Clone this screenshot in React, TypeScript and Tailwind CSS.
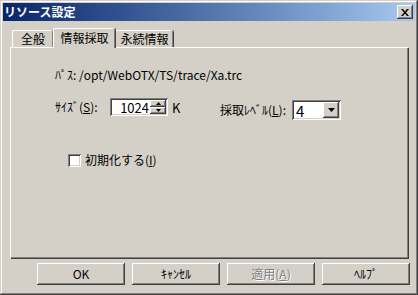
const FONT = { fontFamily: '"Noto Sans CJK JP", "Liberation Sans", sans-serif' }

const RAISED =
  'shadow-[inset_-1px_-1px_#404040,inset_1px_1px_#ffffff,inset_-2px_-2px_#808080,inset_2px_2px_#d4d0c8]'
const SUNKEN =
  'shadow-[inset_1px_1px_#808080,inset_-1px_-1px_#ffffff,inset_2px_2px_#404040,inset_-2px_-2px_#d4d0c8]'

function Tab({ label, active = false, width }: { label: string; active?: boolean; width: string }) {
  if (active) {
    return (
      <div
        className={`${width} h-[20px] -mb-px relative z-10 bg-[#d4d0c8] border-l border-t border-white rounded-tl-[2px] rounded-tr-[2px] shadow-[inset_-1px_0_#808080,1px_0_#404040] flex items-start justify-center pt-[1px] text-[12px] leading-[16px] text-black`}
      >
        {label}
      </div>
    )
  }
  return (
    <div
      className={`${width} h-[17px] bg-[#d4d0c8] border-l border-t border-white rounded-tl-[2px] rounded-tr-[2px] shadow-[inset_-1px_0_#808080,1px_0_#404040] flex items-start justify-center pt-[0px] text-[12px] leading-[16px] text-black`}
    >
      {label}
    </div>
  )
}

function Button({ children, disabled = false }: { children: React.ReactNode; disabled?: boolean }) {
  return (
    <div
      className={`w-[88px] h-[22px] bg-[#d4d0c8] ${RAISED} flex items-center justify-center text-[12px] leading-none ${
        disabled ? 'text-[#808080] [text-shadow:1px_1px_0_#ffffff]' : 'text-black'
      }`}
    >
      {children}
    </div>
  )
}

export default function App() {
  return (
    <div
      className="w-[418px] h-[295px] bg-[#d4d0c8] p-[3px] flex flex-col shadow-[inset_-1px_-1px_#404040,inset_1px_1px_#d4d0c8,inset_-2px_-2px_#808080,inset_2px_2px_#ffffff]"
      style={FONT}
    >
      {/* Title bar */}
      <div className="h-[18px] flex items-center justify-between pl-[1px] pr-[2px] bg-gradient-to-r from-[#0a246a] to-[#a6caf0]">
        <span className="text-white text-[12px] font-bold leading-none">リソース設定</span>
        <div className={`w-[16px] h-[14px] bg-[#d4d0c8] ${RAISED} flex items-center justify-center`}>
          <svg width="8" height="7" viewBox="0 0 8 7">
            <path d="M0 0h2l2 2.5L6 0h2L5 3.5 8 7H6L4 4.5 2 7H0l3-3.5z" fill="#000" />
          </svg>
        </div>
      </div>

      {/* Tabs */}
      <div className="mt-[7px] ml-[9px] flex items-end h-[19px]">
        <Tab label="全般" width="w-[41px]" />
        <Tab label="情報採取" width="w-[62px]" active />
        <Tab label="永続情報" width="w-[58px]" />
      </div>

      {/* Panel */}
      <div className="ml-[7px] w-[398px] h-[211px] border-l border-t border-white shadow-[inset_-1px_-1px_#808080,1px_1px_#404040] pt-[20px] pl-[44px] text-[12px] text-black">
        <div className="h-[14px] leading-[14px]">ﾊﾟｽ: /opt/WebOTX/TS/trace/Xa.trc</div>

        <div className="mt-[16px] flex items-start">
          <div className="w-[165px] flex items-center h-[18px]">
            <span className="w-[55px] leading-none">
              ｻｲｽﾞ(<span className="underline">S</span>):
            </span>
            <div className={`w-[58px] h-[18px] bg-white ${SUNKEN} flex items-center p-[2px]`}>
              <span className="flex-1 text-right pr-[1px] text-[13px] leading-none">1024</span>
              <div className="w-[16px] h-[14px] flex flex-col">
                <div className={`flex-1 bg-[#d4d0c8] ${RAISED} flex items-center justify-center`}>
                  <svg width="5" height="3" viewBox="0 0 5 3">
                    <path d="M2.5 0 5 3H0z" fill="#000" />
                  </svg>
                </div>
                <div className={`flex-1 bg-[#d4d0c8] ${RAISED} flex items-center justify-center`}>
                  <svg width="5" height="3" viewBox="0 0 5 3">
                    <path d="M0 0h5L2.5 3z" fill="#000" />
                  </svg>
                </div>
              </div>
            </div>
            <span className="ml-[4px] leading-none text-[13px]">K</span>
          </div>

          <div className="mt-[2px] flex items-center h-[20px]">
            <span className="w-[72px] leading-none">
              採取ﾚﾍﾞﾙ(<span className="underline">L</span>):
            </span>
            <div className={`w-[49px] h-[20px] bg-white ${SUNKEN} flex items-center p-[2px]`}>
              <span className="flex-1 pl-[2px] text-[15px] leading-none">4</span>
              <div className={`w-[16px] h-[16px] bg-[#d4d0c8] ${RAISED} flex items-center justify-center`}>
                <svg width="7" height="4" viewBox="0 0 7 4">
                  <path d="M0 0h7L3.5 4z" fill="#000" />
                </svg>
              </div>
            </div>
          </div>
        </div>

        <div className="mt-[33px] ml-[13px] flex items-center h-[14px]">
          <div className={`w-[13px] h-[13px] bg-white ${SUNKEN}`} />
          <span className="ml-[4px] leading-none">
            初期化する(<span className="underline">I</span>)
          </span>
        </div>
      </div>

      {/* Buttons */}
      <div className="mt-[5px] ml-[34px] flex gap-[7px]">
        <Button>OK</Button>
        <Button>ｷｬﾝｾﾙ</Button>
        <Button disabled>
          適用(<span className="underline">A</span>)
        </Button>
        <Button>ﾍﾙﾌﾟ</Button>
      </div>
    </div>
  )
}
